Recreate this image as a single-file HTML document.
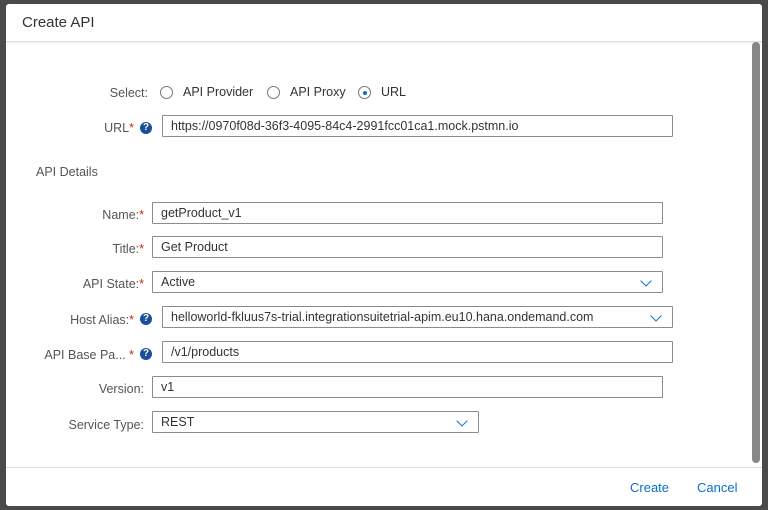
<!DOCTYPE html>
<html><head><style>
body{margin:0;width:768px;height:510px;background:#4a4a4a;font-family:"Liberation Sans",sans-serif;position:relative;overflow:hidden}
.dlg{position:absolute;left:6px;top:4px;width:756px;height:502px;background:#fff;border-radius:3px}
.hdr{position:absolute;left:0;top:0;width:756px;height:37px;border-bottom:1px solid #ddd;box-shadow:0 1px 2px rgba(0,0,0,.08)}
.hdr span{position:absolute;left:16px;top:10px;font-size:15px;color:#333}
.ftr{position:absolute;left:0;top:463px;width:756px;border-top:1px solid #ddd;height:39px}
.a{position:absolute;font-size:13px;color:#0a6ed1}
.lbl{position:absolute;font-size:12.5px;color:#555;text-align:right}
.star{color:#d0271d}
.inp{position:absolute;height:22px;border:1px solid #8c8c8c;background:#fff;font-size:12.5px;color:#333;box-sizing:border-box;padding:3px 8px;border-radius:1px}
.dd::after{content:"";position:absolute;right:12px;top:5px;width:7px;height:7px;border-right:1.3px solid #0a6ed1;border-bottom:1.3px solid #0a6ed1;transform:rotate(45deg)}
.q{position:absolute;width:12px;height:12px;border-radius:50%;background:#1a4f9c;color:#fff;font-size:10px;font-weight:bold;text-align:center;line-height:12px}
.rb{position:absolute;width:13px;height:13px;border:1px solid #777;border-radius:50%;box-sizing:border-box}
.sb{position:absolute;left:746px;top:38px;width:8px;height:421px;background:#888;border-radius:4px}
</style></head><body>
<div class="dlg">
<div class="hdr"><span>Create API</span></div>
<div class="sb"></div>
<div class="lbl" style="left:80px;top:82px;width:62px">Select:</div>
<div class="rb" style="left:154px;top:82px"></div><div class="lbl" style="left:177px;top:81px;text-align:left;color:#333">API Provider</div>
<div class="rb" style="left:261px;top:82px"></div><div class="lbl" style="left:284px;top:81px;text-align:left;color:#333">API Proxy</div>
<div class="rb" style="left:352px;top:82px"><div style="position:absolute;left:3.5px;top:3.5px;width:4px;height:4px;border-radius:50%;background:#0a6ed1"></div></div><div class="lbl" style="left:375px;top:81px;text-align:left;color:#333">URL</div>
<div class="lbl" style="left:60px;top:117px;width:68px">URL<span class="star">*</span></div><div class="q" style="left:134px;top:118px">?</div>
<div class="inp" style="left:156px;top:111px;width:511px">https://0970f08d-36f3-4095-84c4-2991fcc01ca1.mock.pstmn.io</div>
<div class="lbl" style="left:30px;top:161px;text-align:left">API Details</div>
<div class="lbl" style="left:30px;top:204px;width:108px">Name:<span class="star">*</span></div>
<div class="inp" style="left:146px;top:198px;width:511px">getProduct_v1</div>
<div class="lbl" style="left:30px;top:238px;width:108px">Title:<span class="star">*</span></div>
<div class="inp" style="left:146px;top:232px;width:511px">Get Product</div>
<div class="lbl" style="left:30px;top:273px;width:108px">API State:<span class="star">*</span></div>
<div class="inp dd" style="left:146px;top:267px;width:511px">Active</div>
<div class="lbl" style="left:20px;top:309px;width:108px">Host Alias:<span class="star">*</span></div><div class="q" style="left:134px;top:309px">?</div>
<div class="inp dd" style="left:156px;top:302px;width:511px">helloworld-fkluus7s-trial.integrationsuitetrial-apim.eu10.hana.ondemand.com</div>
<div class="lbl" style="left:10px;top:344px;width:118px">API Base Pa... <span class="star">*</span></div><div class="q" style="left:134px;top:344px">?</div>
<div class="inp" style="left:156px;top:337px;width:511px">/v1/products</div>
<div class="lbl" style="left:30px;top:378px;width:108px">Version:</div>
<div class="inp" style="left:146px;top:372px;width:511px">v1</div>
<div class="lbl" style="left:30px;top:414px;width:108px">Service Type:</div>
<div class="inp dd" style="left:146px;top:407px;width:327px">REST</div>
<div class="ftr"></div>
<div class="a" style="left:624px;top:476px">Create</div>
<div class="a" style="left:691px;top:476px">Cancel</div>
</div>
</body></html>
